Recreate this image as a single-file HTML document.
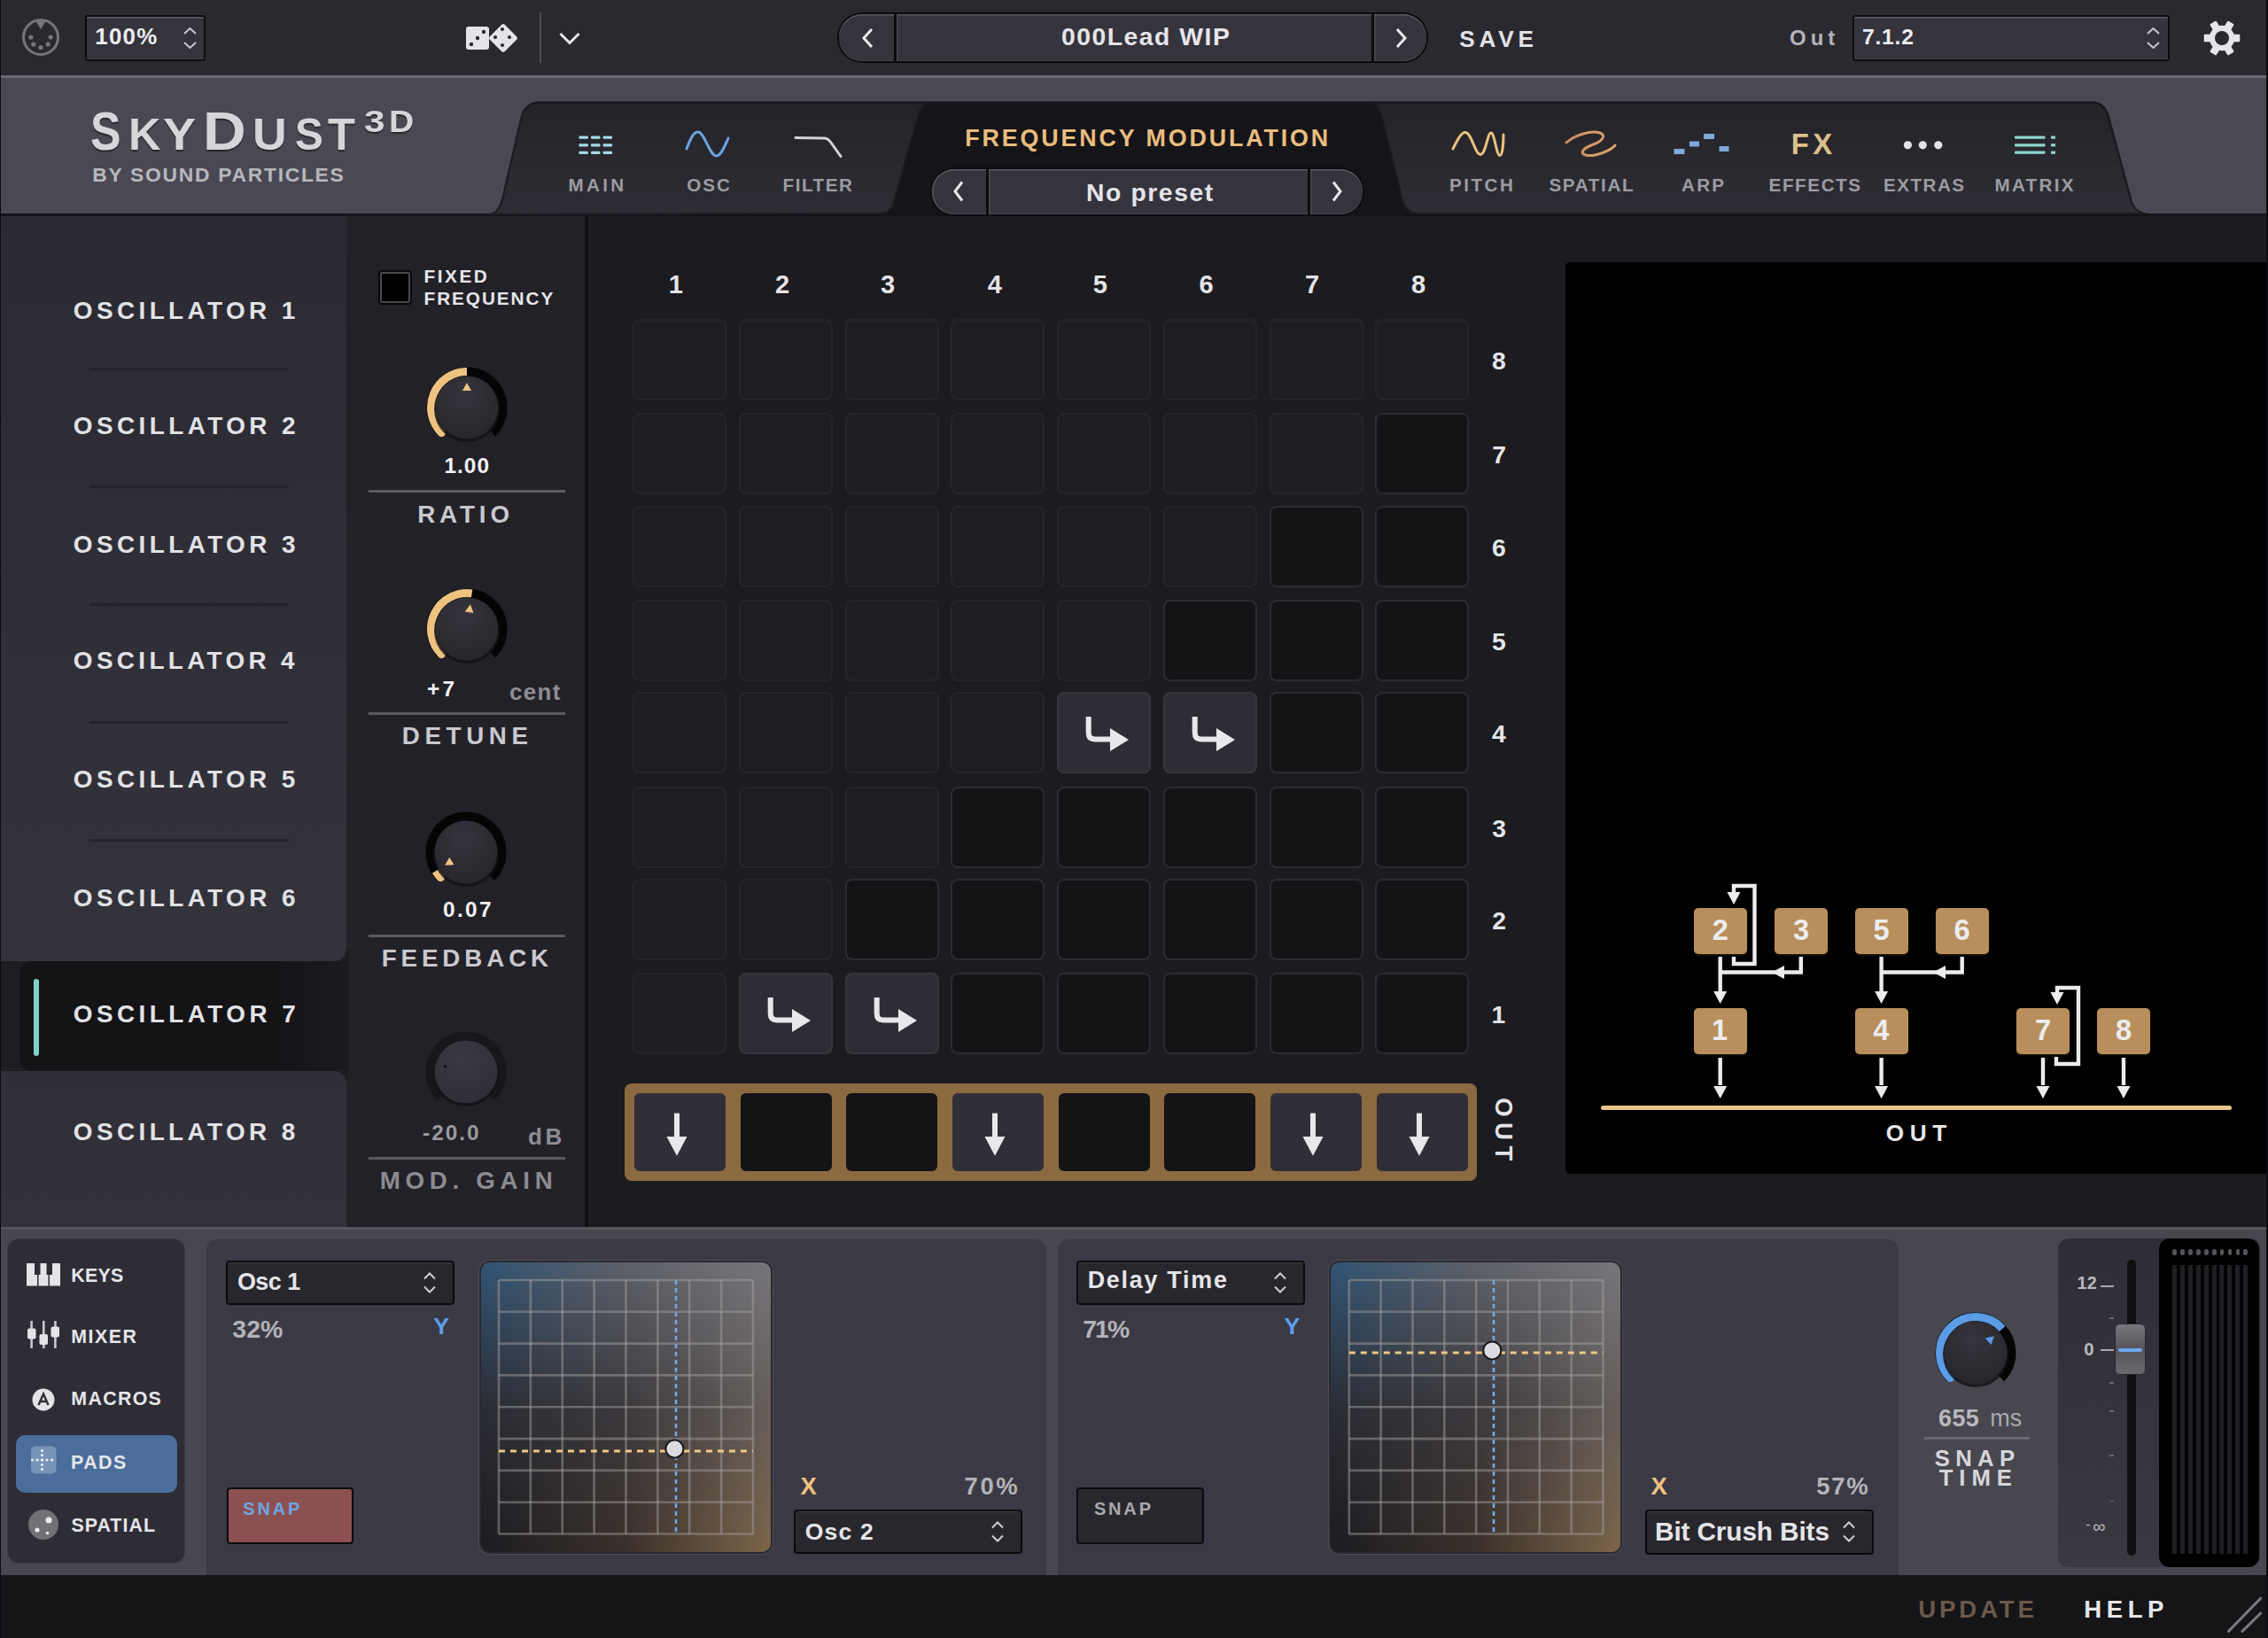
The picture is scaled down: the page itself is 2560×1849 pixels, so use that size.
<!DOCTYPE html>
<html><head><meta charset="utf-8">
<style>
*{margin:0;padding:0;box-sizing:border-box}
html,body{width:2560px;height:1849px;overflow:hidden;background:#1b1a1f;font-family:"Liberation Sans",sans-serif;font-weight:bold;position:relative}
.a{position:absolute}
.t{position:absolute;white-space:nowrap;line-height:1}
svg{position:absolute;overflow:visible}
</style></head><body>
<div class="a" style="left:0px;top:0px;width:2560px;height:86px;background:#2a2930;"></div>
<div class="a" style="left:0px;top:85px;width:2560px;height:3px;background:#6b6a72;"></div>
<svg style="left:20px;top:16px" width="52" height="52" viewBox="0 0 52 52">
<circle cx="26" cy="26" r="19.5" fill="none" stroke="#77767c" stroke-width="3"/>
<path d="M20.5 8 L31.5 8 L26 17 Z" fill="#77767c"/>
<circle cx="14.8" cy="26" r="2.6" fill="#77767c"/><circle cx="37.2" cy="26" r="2.6" fill="#77767c"/>
<circle cx="17.8" cy="34" r="2.6" fill="#77767c"/><circle cx="34.2" cy="34" r="2.6" fill="#77767c"/>
<circle cx="26" cy="37.5" r="2.6" fill="#77767c"/>
</svg>
<div class="a" style="left:96px;top:17px;width:136px;height:52px;background:#35343d;border:2px solid #0c0c0e;box-shadow:inset 0 1.5px 0 #5d5c64, inset 0 -1px 0 #45444c;border-radius:3px"></div>
<div class="t" style="left:107.37px;top:28.59px;font-size:25.87px;letter-spacing:1.21px;color:#ececef;font-weight:bold;">100%</div>
<svg style="left:205px;top:29px" width="20" height="28" viewBox="0 0 20 28">
<path d="M3 9 L9.5 3 L16 9 M3 19 L9.5 25 L16 19" fill="none" stroke="#c9c9ce" stroke-width="2"/>
</svg>
<svg style="left:524px;top:23px" width="62" height="40" viewBox="0 0 62 40">
<rect x="2" y="7" width="26" height="26" rx="3" fill="#e4e4e8"/>
<circle cx="8" cy="27" r="2.2" fill="#2a2930"/><circle cx="15" cy="20" r="2.2" fill="#2a2930"/><circle cx="22" cy="13" r="2.2" fill="#2a2930"/>
<rect x="35" y="6" width="24" height="24" rx="3" fill="#e4e4e8" transform="rotate(45 44 20) translate(-3 2)"/>
<circle cx="43" cy="10" r="2.1" fill="#2a2930"/><circle cx="35" cy="19" r="2.1" fill="#2a2930"/><circle cx="51" cy="19" r="2.1" fill="#2a2930"/>
<circle cx="43" cy="28" r="2.1" fill="#2a2930"/><circle cx="43" cy="19" r="0" fill="#2a2930"/>
</svg>
<div class="a" style="left:609px;top:14px;width:2px;height:57px;background:#4d4c53;"></div>
<svg style="left:628px;top:32px" width="30" height="22" viewBox="0 0 30 22">
<path d="M4.5 6 L15 16.5 L25.5 6" fill="none" stroke="#e8e8ec" stroke-width="3"/>
</svg>
<div class="a" style="left:945px;top:14px;width:667px;height:57px;background:#0b0b0d;border-radius:28px 28px 28px 28px"></div>
<div class="a" style="left:947px;top:16px;width:62px;height:53px;background:#35343d;border-radius:26px 0 0 26px;box-shadow:inset 0 1.5px 0 #5a5961, inset 0 -1px 0 #45444c"></div>
<div class="a" style="left:1012px;top:16px;width:536px;height:53px;background:#35343d;box-shadow:inset 0 1.5px 0 #5a5961, inset 0 -1px 0 #45444c, inset 1.5px 0 0 #4a4951"></div>
<div class="a" style="left:1551px;top:16px;width:59px;height:53px;background:#35343d;border-radius:0 26px 26px 0;box-shadow:inset 0 1.5px 0 #5a5961, inset 0 -1px 0 #45444c, inset 1.5px 0 0 #4a4951"></div>
<svg style="left:968px;top:30px" width="24" height="26" viewBox="0 0 24 26">
<path d="M16 3 L7 13 L16 23" fill="none" stroke="#e8e8ec" stroke-width="3"/></svg>
<svg style="left:1569px;top:30px" width="24" height="26" viewBox="0 0 24 26">
<path d="M8 3 L17 13 L8 23" fill="none" stroke="#e8e8ec" stroke-width="3"/></svg>
<div class="t" style="left:1197.88px;top:27.20px;font-size:28.34px;letter-spacing:1.52px;color:#e6e6ea;font-weight:bold;">000Lead WIP</div>
<div class="t" style="left:1647.25px;top:30.85px;font-size:26.16px;letter-spacing:4.84px;color:#e2e2e6;font-weight:bold;">SAVE</div>
<div class="t" style="left:2020.02px;top:30.69px;font-size:23.98px;letter-spacing:4.99px;color:#b4b3b9;font-weight:bold;">Out</div>
<div class="a" style="left:2091px;top:17px;width:358px;height:52px;background:#35343d;border:2px solid #0c0c0e;box-shadow:inset 0 1.5px 0 #5d5c64, inset 0 -1px 0 #45444c;border-radius:3px"></div>
<div class="t" style="left:2101.94px;top:30.08px;font-size:24.71px;letter-spacing:0.77px;color:#ececef;font-weight:bold;">7.1.2</div>
<svg style="left:2421px;top:29px" width="20" height="28" viewBox="0 0 20 28">
<path d="M3 9 L9.5 3 L16 9 M3 19 L9.5 25 L16 19" fill="none" stroke="#c9c9ce" stroke-width="2"/>
</svg>
<svg style="left:2486px;top:21px" width="44" height="44" viewBox="-22 -22 44 44">
<rect x="10" y="-4.2" width="10.3" height="8.4" rx="1" fill="#e6e6ea" transform="rotate(0)"/><rect x="10" y="-4.2" width="10.3" height="8.4" rx="1" fill="#e6e6ea" transform="rotate(60)"/><rect x="10" y="-4.2" width="10.3" height="8.4" rx="1" fill="#e6e6ea" transform="rotate(120)"/><rect x="10" y="-4.2" width="10.3" height="8.4" rx="1" fill="#e6e6ea" transform="rotate(180)"/><rect x="10" y="-4.2" width="10.3" height="8.4" rx="1" fill="#e6e6ea" transform="rotate(240)"/><rect x="10" y="-4.2" width="10.3" height="8.4" rx="1" fill="#e6e6ea" transform="rotate(300)"/>
<circle cx="0" cy="0" r="14.2" fill="#e6e6ea"/>
<circle cx="0" cy="0" r="8" fill="#2a2930"/>
</svg>
<div class="a" style="left:0px;top:88px;width:2560px;height:153px;background:#4a4953;"></div>
<div class="a" style="left:0px;top:241px;width:2560px;height:3px;background:#141318;"></div>
<svg style="left:0;top:0" width="2560" height="250" viewBox="0 0 2560 250">
<defs>
<linearGradient id="tabg" x1="0" y1="0" x2="0" y2="1">
<stop offset="0" stop-color="#242328"/><stop offset="1" stop-color="#2e2d35"/>
</linearGradient>
</defs>
<path d="M550 242 C560 242 565 232 567.5 219 L588 131 C591 120 598 114.5 610 114.5 L2361 114.5 C2372 114.5 2379 121 2382 135 L2407 228 C2410 236 2416 242 2425 242 Z" fill="#151418"/>
<path d="M552 242 C561 242 566 232 568.5 219 L589 131 C592 121 599 116.5 611 116.5 L1044 116.5 C1040 120 1038 124 1037 128 L1008 231 C1006 237 1001 241 992 241 Z" fill="url(#tabg)" stroke="#1c1b21" stroke-width="2"/>
<path d="M1550 116.5 L2360 116.5 C2371 116.5 2377 122 2380 135 L2406 228 C2409 236 2415 241 2424 241 L1601 241 C1592 241 1586 236 1583 226 L1562 140 C1559 128 1556 120 1550 116.5 Z" fill="url(#tabg)" stroke="#1c1b21" stroke-width="2"/>
</svg>
<div class="t" style="left:101.51px;top:116.70px;font-size:61.77px;color:#d6d6da;font-weight:bold;transform:scaleX(0.8376);transform-origin:0 0;text-shadow:0 2px 1px rgba(0,0,0,0.45)">S</div>
<div class="t" style="left:144.62px;top:127.16px;font-size:49.42px;color:#d6d6da;font-weight:bold;transform:scaleX(1.0212);transform-origin:0 0;text-shadow:0 2px 1px rgba(0,0,0,0.45)">K</div>
<div class="t" style="left:183.85px;top:127.16px;font-size:49.42px;color:#d6d6da;font-weight:bold;transform:scaleX(1.1238);transform-origin:0 0;text-shadow:0 2px 1px rgba(0,0,0,0.45)">Y</div>
<div class="t" style="left:229.08px;top:116.70px;font-size:61.77px;color:#d6d6da;font-weight:bold;transform:scaleX(1.0928);transform-origin:0 0;text-shadow:0 2px 1px rgba(0,0,0,0.45)">D</div>
<div class="t" style="left:284.58px;top:127.16px;font-size:49.42px;color:#d6d6da;font-weight:bold;transform:scaleX(1.0840);transform-origin:0 0;text-shadow:0 2px 1px rgba(0,0,0,0.45)">U</div>
<div class="t" style="left:332.62px;top:127.16px;font-size:49.42px;color:#d6d6da;font-weight:bold;transform:scaleX(0.9659);transform-origin:0 0;text-shadow:0 2px 1px rgba(0,0,0,0.45)">S</div>
<div class="t" style="left:370.43px;top:127.16px;font-size:49.42px;color:#d6d6da;font-weight:bold;transform:scaleX(1.0206);transform-origin:0 0;text-shadow:0 2px 1px rgba(0,0,0,0.45)">T</div>
<div class="t" style="left:411.03px;top:120.30px;font-size:35.90px;color:#d6d6da;font-weight:bold;transform:scaleX(1.1768);transform-origin:0 0;text-shadow:0 2px 1px rgba(0,0,0,0.45)">3</div>
<div class="t" style="left:438.98px;top:120.30px;font-size:35.90px;color:#d6d6da;font-weight:bold;transform:scaleX(1.0900);transform-origin:0 0;text-shadow:0 2px 1px rgba(0,0,0,0.45)">D</div>
<div class="t" style="left:104.27px;top:186.38px;font-size:22.82px;letter-spacing:1.74px;color:#b9b8be;font-weight:bold;">BY SOUND PARTICLES</div>
<svg style="left:650px;top:150px" width="48" height="28" viewBox="0 0 48 28"><rect x="3.4" y="3.6" width="10.5" height="3.2" rx="1.2" fill="#a3dbe8"/><rect x="17" y="3.6" width="10.5" height="3.2" rx="1.2" fill="#a3dbe8"/><rect x="30.6" y="3.6" width="10.5" height="3.2" rx="1.2" fill="#a3dbe8"/><rect x="3.4" y="12.3" width="10.5" height="3.2" rx="1.2" fill="#a3dbe8"/><rect x="17" y="12.3" width="10.5" height="3.2" rx="1.2" fill="#a3dbe8"/><rect x="30.6" y="12.3" width="10.5" height="3.2" rx="1.2" fill="#a3dbe8"/><rect x="3.4" y="20.799999999999997" width="10.5" height="3.2" rx="1.2" fill="#a3dbe8"/><rect x="17" y="20.799999999999997" width="10.5" height="3.2" rx="1.2" fill="#a3dbe8"/><rect x="30.6" y="20.799999999999997" width="10.5" height="3.2" rx="1.2" fill="#a3dbe8"/></svg>
<svg style="left:770px;top:143px" width="58" height="40" viewBox="770 143 58 40">
<path d="M775 168 C780 155 783 149 788 149 C795 149 801 176 808.5 176 C814 176 818 165 822 156" fill="none" stroke="#6aa3e0" stroke-width="3" stroke-linecap="round"/>
</svg>
<svg style="left:890px;top:148px" width="66" height="36" viewBox="890 148 66 36">
<path d="M898 155.5 L930 156 C934 156 936 158 938 161 L949 176.5" fill="none" stroke="#d4d4d8" stroke-width="3" stroke-linecap="round"/>
</svg>
<div class="t" style="left:641.42px;top:199.02px;font-size:20.64px;letter-spacing:3.34px;color:#9d9ca3;font-weight:bold;">MAIN</div>
<div class="t" style="left:775.15px;top:199.02px;font-size:20.64px;letter-spacing:2.09px;color:#9d9ca3;font-weight:bold;">OSC</div>
<div class="t" style="left:883.62px;top:199.02px;font-size:20.64px;letter-spacing:1.51px;color:#9d9ca3;font-weight:bold;">FILTER</div>
<div class="t" style="left:1089.20px;top:142.63px;font-size:26.89px;letter-spacing:2.85px;color:#e9bd7e;font-weight:bold;">FREQUENCY MODULATION</div>
<div class="a" style="left:1050px;top:189px;width:490px;height:55px;background:#0d0d10;border-radius:27px"></div>
<div class="a" style="left:1052px;top:191px;width:61px;height:51px;background:#35343d;border-radius:25px 0 0 25px;box-shadow:inset 0 1.5px 0 #5a5961, inset 1.5px 0 0 #55545c, inset 0 -1px 0 #45444c"></div>
<div class="a" style="left:1116px;top:191px;width:360px;height:51px;background:#35343d;box-shadow:inset 0 1.5px 0 #5a5961, inset 0 -1px 0 #45444c, inset 1.5px 0 0 #4a4951"></div>
<div class="a" style="left:1479px;top:191px;width:59px;height:51px;background:#35343d;border-radius:0 25px 25px 0;box-shadow:inset 0 1.5px 0 #5a5961, inset 0 -1px 0 #45444c, inset 1.5px 0 0 #4a4951"></div>
<svg style="left:1071px;top:203px" width="24" height="26" viewBox="0 0 24 26">
<path d="M15 2.5 L7 13 L15 23.5" fill="none" stroke="#e8e8ec" stroke-width="3"/></svg>
<svg style="left:1496px;top:203px" width="24" height="26" viewBox="0 0 24 26">
<path d="M9 2.5 L17 13 L9 23.5" fill="none" stroke="#e8e8ec" stroke-width="3"/></svg>
<div class="t" style="left:1226.10px;top:203.00px;font-size:28.34px;letter-spacing:1.56px;color:#e4e4e8;font-weight:bold;">No preset</div>
<svg style="left:1630px;top:140px" width="80" height="45" viewBox="1630 140 80 45">
<path d="M1640 168 C1645 158 1649 149.5 1654 149.5 C1661 149.5 1665 174.5 1671 174.5 C1677 174.5 1679 150 1683 150 C1687 150 1689 175.5 1693 175.5 C1696 175.5 1697 160 1697 152" fill="none" stroke="#e9c27d" stroke-width="3" stroke-linecap="round"/>
</svg>
<svg style="left:1760px;top:140px" width="72" height="45" viewBox="1760 140 72 45">
<defs><linearGradient id="spg" x1="0" y1="0" x2="1" y2="0"><stop offset="0" stop-color="#d08a60"/><stop offset="1" stop-color="#d9a66c"/></linearGradient></defs>
<path d="M1768 161 C1778 152 1796 147 1806 150 C1814 153 1808 160 1796 164 M1796 164 C1786 168 1782 174 1792 175.5 C1802 176.5 1818 170 1823 164" fill="none" stroke="url(#spg)" stroke-width="3" stroke-linecap="round"/>
</svg>
<svg style="left:1885px;top:148px" width="72" height="30" viewBox="1885 148 72 30">
<rect x="1889.5" y="168" width="12" height="6" fill="#7ea9dc"/>
<rect x="1907" y="159.5" width="11" height="6" fill="#7ea9dc"/>
<rect x="1923" y="151" width="12" height="6" fill="#7ea9dc"/>
<rect x="1940.5" y="165" width="11" height="6" fill="#7ea9dc"/>
</svg>
<div class="t" style="left:2021.80px;top:146.59px;font-size:32.85px;letter-spacing:4.51px;color:#dcc08a;font-weight:bold;">FX</div>
<svg style="left:2140px;top:150px" width="60" height="28" viewBox="2140 150 60 28">
<circle cx="2153.4" cy="163.8" r="4.6" fill="#e4e4e8"/><circle cx="2170.3" cy="163.8" r="4.6" fill="#e4e4e8"/><circle cx="2187.8" cy="163.8" r="4.6" fill="#e4e4e8"/>
</svg>
<svg style="left:2268px;top:148px" width="60" height="30" viewBox="2268 148 60 30">
<rect x="2274" y="153.5" width="34.5" height="3.2" rx="1" fill="#8fd6cf"/>
<rect x="2274" y="162.2" width="34.5" height="3.2" rx="1" fill="#8fd6cf"/>
<rect x="2274" y="170.6" width="34.5" height="3.2" rx="1" fill="#8fd6cf"/>
<rect x="2315" y="153.5" width="5" height="3.2" fill="#8fd6cf"/>
<rect x="2315" y="162.2" width="5" height="3.2" fill="#8fd6cf"/>
<rect x="2315" y="170.6" width="5" height="3.2" fill="#8fd6cf"/>
</svg>
<div class="t" style="left:1636.12px;top:199.22px;font-size:20.64px;letter-spacing:2.46px;color:#9d9ca3;font-weight:bold;">PITCH</div>
<div class="t" style="left:1748.41px;top:199.22px;font-size:20.64px;letter-spacing:1.66px;color:#9d9ca3;font-weight:bold;">SPATIAL</div>
<div class="t" style="left:1898.09px;top:199.22px;font-size:20.64px;letter-spacing:2.22px;color:#9d9ca3;font-weight:bold;">ARP</div>
<div class="t" style="left:1996.62px;top:199.22px;font-size:20.64px;letter-spacing:1.58px;color:#9d9ca3;font-weight:bold;">EFFECTS</div>
<div class="t" style="left:2126.12px;top:199.22px;font-size:20.64px;letter-spacing:1.45px;color:#9d9ca3;font-weight:bold;">EXTRAS</div>
<div class="t" style="left:2251.42px;top:199.22px;font-size:20.64px;letter-spacing:2.33px;color:#9d9ca3;font-weight:bold;">MATRIX</div>
<div class="a" style="left:391px;top:244px;width:269px;height:1141px;background:#222128;"></div>
<div class="a" style="left:660px;top:244px;width:4px;height:1141px;background:#111014;"></div>
<div class="a" style="left:664px;top:244px;width:1896px;height:1141px;background:#1c1b20;"></div>
<div class="a" style="left:0px;top:1070px;width:394px;height:150px;background:#1e1d23;"></div>
<div class="a" style="left:22px;top:1085px;width:372px;height:124px;background:linear-gradient(90deg,#141316 0%,#141316 78%,#1c1b21 100%);border-radius:14px 0 0 14px"></div>
<div class="a" style="left:0px;top:244px;width:391px;height:841px;background:linear-gradient(180deg,#2b2a33,#34333c);border-radius:0 0 14px 0"></div>
<div class="a" style="left:0px;top:1209px;width:391px;height:176px;background:linear-gradient(180deg,#302f38,#33323b);border-radius:0 14px 0 0"></div>
<div class="a" style="left:37.5px;top:1105px;width:6px;height:87px;background:#7fd3c8;border-radius:3px"></div>
<div class="t" style="left:82.86px;top:336.57px;font-size:27.91px;letter-spacing:4.39px;color:#e2e2e6;font-weight:bold;">OSCILLATOR 1</div>
<div class="t" style="left:82.86px;top:467.27px;font-size:27.91px;letter-spacing:4.42px;color:#e2e2e6;font-weight:bold;">OSCILLATOR 2</div>
<div class="t" style="left:82.86px;top:600.57px;font-size:27.91px;letter-spacing:4.41px;color:#e2e2e6;font-weight:bold;">OSCILLATOR 3</div>
<div class="t" style="left:82.86px;top:732.37px;font-size:27.91px;letter-spacing:4.33px;color:#e2e2e6;font-weight:bold;">OSCILLATOR 4</div>
<div class="t" style="left:82.86px;top:865.57px;font-size:27.91px;letter-spacing:4.39px;color:#e2e2e6;font-weight:bold;">OSCILLATOR 5</div>
<div class="t" style="left:82.86px;top:999.57px;font-size:27.91px;letter-spacing:4.41px;color:#e2e2e6;font-weight:bold;">OSCILLATOR 6</div>
<div class="t" style="left:82.86px;top:1130.57px;font-size:27.91px;letter-spacing:4.43px;color:#e2e2e6;font-weight:bold;">OSCILLATOR 7</div>
<div class="t" style="left:82.86px;top:1264.17px;font-size:27.91px;letter-spacing:4.39px;color:#e2e2e6;font-weight:bold;">OSCILLATOR 8</div>
<div class="a" style="left:101px;top:415px;width:225px;height:3px;background:#24232a;"></div>
<div class="a" style="left:101px;top:548px;width:225px;height:3px;background:#24232a;"></div>
<div class="a" style="left:101px;top:681px;width:225px;height:3px;background:#24232a;"></div>
<div class="a" style="left:101px;top:813.5px;width:225px;height:3px;background:#24232a;"></div>
<div class="a" style="left:101px;top:946.5px;width:225px;height:3px;background:#24232a;"></div>
<div class="a" style="left:426.5px;top:305px;width:38px;height:39px;background:#000;border:2px solid #0a0a0c;box-shadow:inset 0 0 0 2px #4a4950;border-radius:4px"></div>
<div class="t" style="left:478.61px;top:301.70px;font-size:20.79px;letter-spacing:2.51px;color:#e6e6ea;font-weight:bold;">FIXED</div>
<div class="t" style="left:478.61px;top:326.70px;font-size:20.79px;letter-spacing:1.90px;color:#e6e6ea;font-weight:bold;">FREQUENCY</div>
<svg style="left:466.70000000000005px;top:399.8px" width="120" height="120" viewBox="0 0 120 120"><defs><radialGradient id="kb526.7459.8" cx="0.45" cy="0.3" r="0.8"><stop offset="0" stop-color="#36353d"/><stop offset="1" stop-color="#25242a"/></radialGradient></defs><path d="M31.36 88.64 A40.5 40.5 0 1 1 88.64 88.64" fill="none" stroke="#050506" stroke-width="10"/><path d="M31.36 88.64 A40.5 40.5 0 0 1 60.00 19.50" fill="none" stroke="#eec27f" stroke-width="9" stroke-linecap="butt"/><circle cx="31.36" cy="88.64" r="4.5" fill="#eec27f"/><circle cx="60" cy="62" r="37" fill="#121115" opacity="0.8"/><circle cx="60" cy="60" r="35.5" fill="url(#kb526.7459.8)"/><g transform="translate(60.00 37.00) rotate(0)"><path d="M0 -5 L5 4 L-5 4 Z" fill="#eec27f"/></g></svg>
<div class="t" style="left:501.46px;top:514.12px;font-size:24.42px;letter-spacing:1.00px;color:#f2f2f4;font-weight:bold;">1.00</div>
<div class="a" style="left:416px;top:552.5px;width:222px;height:3px;background:#5c5b62;"></div>
<div class="t" style="left:471.14px;top:567.29px;font-size:27.76px;letter-spacing:4.91px;color:#c9c8ce;font-weight:bold;">RATIO</div>
<svg style="left:466.70000000000005px;top:649.8px" width="120" height="120" viewBox="0 0 120 120"><defs><radialGradient id="kb526.7709.8" cx="0.45" cy="0.3" r="0.8"><stop offset="0" stop-color="#36353d"/><stop offset="1" stop-color="#25242a"/></radialGradient></defs><path d="M31.36 88.64 A40.5 40.5 0 1 1 88.64 88.64" fill="none" stroke="#050506" stroke-width="10"/><path d="M31.36 88.64 A40.5 40.5 0 0 1 65.64 19.89" fill="none" stroke="#eec27f" stroke-width="9" stroke-linecap="butt"/><circle cx="31.36" cy="88.64" r="4.5" fill="#eec27f"/><circle cx="60" cy="62" r="37" fill="#121115" opacity="0.8"/><circle cx="60" cy="60" r="35.5" fill="url(#kb526.7709.8)"/><g transform="translate(63.20 37.22) rotate(8)"><path d="M0 -5 L5 4 L-5 4 Z" fill="#eec27f"/></g></svg>
<div class="t" style="left:481.97px;top:766.12px;font-size:24.42px;letter-spacing:3.26px;color:#f2f2f4;font-weight:bold;">+7</div>
<div class="t" style="left:574.98px;top:767.57px;font-size:26.02px;letter-spacing:1.28px;color:#8d8c92;font-weight:bold;">cent</div>
<div class="a" style="left:416px;top:803.5px;width:222px;height:3px;background:#5c5b62;"></div>
<div class="t" style="left:453.74px;top:816.59px;font-size:27.76px;letter-spacing:5.64px;color:#c9c8ce;font-weight:bold;">DETUNE</div>
<svg style="left:466.20000000000005px;top:901.6px" width="120" height="120" viewBox="0 0 120 120"><defs><radialGradient id="kb526.2961.6" cx="0.45" cy="0.3" r="0.8"><stop offset="0" stop-color="#36353d"/><stop offset="1" stop-color="#25242a"/></radialGradient></defs><path d="M31.36 88.64 A40.5 40.5 0 1 1 88.64 88.64" fill="none" stroke="#050506" stroke-width="10"/><path d="M31.36 88.64 A40.5 40.5 0 0 1 25.65 81.46" fill="none" stroke="#eec27f" stroke-width="9" stroke-linecap="butt"/><circle cx="31.36" cy="88.64" r="4.5" fill="#eec27f"/><circle cx="60" cy="62" r="37" fill="#121115" opacity="0.8"/><circle cx="60" cy="60" r="35.5" fill="url(#kb526.2961.6)"/><g transform="translate(40.49 72.19) rotate(-122)"><path d="M0 -5 L5 4 L-5 4 Z" fill="#eec27f"/></g></svg>
<div class="t" style="left:500.03px;top:1015.12px;font-size:24.42px;letter-spacing:2.37px;color:#f2f2f4;font-weight:bold;">0.07</div>
<div class="a" style="left:416px;top:1055px;width:222px;height:3px;background:#5c5b62;"></div>
<div class="t" style="left:430.64px;top:1068.09px;font-size:27.76px;letter-spacing:4.91px;color:#c9c8ce;font-weight:bold;">FEEDBACK</div>
<svg style="left:466px;top:1150.4px" width="120" height="120" viewBox="0 0 120 120"><defs><radialGradient id="kb5261210.4" cx="0.45" cy="0.3" r="0.8"><stop offset="0" stop-color="#3a3942"/><stop offset="1" stop-color="#2e2d35"/></radialGradient></defs><path d="M31.36 88.64 A40.5 40.5 0 1 1 88.64 88.64" fill="none" stroke="#17161b" stroke-width="10"/><circle cx="60" cy="62" r="37" fill="#121115" opacity="0.8"/><circle cx="60" cy="60" r="35.5" fill="url(#kb5261210.4)"/><circle cx="36.82" cy="53.79" r="1.6" fill="#0a0a0a"/></svg>
<div class="t" style="left:477.05px;top:1267.12px;font-size:24.42px;letter-spacing:2.00px;color:#9a999f;font-weight:bold;">-20.0</div>
<div class="t" style="left:595.93px;top:1269.57px;font-size:26.02px;letter-spacing:3.57px;color:#8d8c92;font-weight:bold;">dB</div>
<div class="a" style="left:416px;top:1305.5px;width:222px;height:3px;background:#5c5b62;"></div>
<div class="t" style="left:428.74px;top:1318.59px;font-size:27.76px;letter-spacing:5.69px;color:#8c8b91;font-weight:bold;">MOD. GAIN</div>
<div class="t" style="left:754.71px;top:307.39px;font-size:29.07px;letter-spacing:0.00px;color:#e4e4e8;font-weight:bold;">1</div>
<div class="t" style="left:874.99px;top:307.39px;font-size:29.07px;letter-spacing:0.00px;color:#e4e4e8;font-weight:bold;">2</div>
<div class="t" style="left:994.11px;top:307.39px;font-size:29.07px;letter-spacing:0.00px;color:#e4e4e8;font-weight:bold;">3</div>
<div class="t" style="left:1114.77px;top:307.39px;font-size:29.07px;letter-spacing:0.00px;color:#e4e4e8;font-weight:bold;">4</div>
<div class="t" style="left:1233.87px;top:307.39px;font-size:29.07px;letter-spacing:0.00px;color:#e4e4e8;font-weight:bold;">5</div>
<div class="t" style="left:1353.61px;top:307.39px;font-size:29.07px;letter-spacing:0.00px;color:#e4e4e8;font-weight:bold;">6</div>
<div class="t" style="left:1472.93px;top:307.39px;font-size:29.07px;letter-spacing:0.00px;color:#e4e4e8;font-weight:bold;">7</div>
<div class="t" style="left:1592.90px;top:307.39px;font-size:29.07px;letter-spacing:0.00px;color:#e4e4e8;font-weight:bold;">8</div>
<div class="t" style="left:1684.10px;top:393.10px;font-size:28.34px;letter-spacing:0.00px;color:#e4e4e8;font-weight:bold;">8</div>
<div class="a" style="left:714.3px;top:360px;width:106px;height:92px;border-radius:8px;background:#1e1d22;border:2px solid #26252b"></div>
<div class="a" style="left:834.0px;top:360px;width:106px;height:92px;border-radius:8px;background:#1e1d22;border:2px solid #26252b"></div>
<div class="a" style="left:953.7px;top:360px;width:106px;height:92px;border-radius:8px;background:#1e1d22;border:2px solid #26252b"></div>
<div class="a" style="left:1073.4px;top:360px;width:106px;height:92px;border-radius:8px;background:#1e1d22;border:2px solid #26252b"></div>
<div class="a" style="left:1193.1px;top:360px;width:106px;height:92px;border-radius:8px;background:#1e1d22;border:2px solid #26252b"></div>
<div class="a" style="left:1312.8px;top:360px;width:106px;height:92px;border-radius:8px;background:#1e1d22;border:2px solid #26252b"></div>
<div class="a" style="left:1432.5px;top:360px;width:106px;height:92px;border-radius:8px;background:#1e1d22;border:2px solid #26252b"></div>
<div class="a" style="left:1552.2px;top:360px;width:106px;height:92px;border-radius:8px;background:#1e1d22;border:2px solid #26252b"></div>
<div class="t" style="left:1684.13px;top:498.60px;font-size:28.34px;letter-spacing:0.00px;color:#e4e4e8;font-weight:bold;">7</div>
<div class="a" style="left:714.3px;top:465.5px;width:106px;height:92px;border-radius:8px;background:#1e1d22;border:2px solid #26252b"></div>
<div class="a" style="left:834.0px;top:465.5px;width:106px;height:92px;border-radius:8px;background:#1e1d22;border:2px solid #26252b"></div>
<div class="a" style="left:953.7px;top:465.5px;width:106px;height:92px;border-radius:8px;background:#1e1d22;border:2px solid #26252b"></div>
<div class="a" style="left:1073.4px;top:465.5px;width:106px;height:92px;border-radius:8px;background:#1e1d22;border:2px solid #26252b"></div>
<div class="a" style="left:1193.1px;top:465.5px;width:106px;height:92px;border-radius:8px;background:#1e1d22;border:2px solid #26252b"></div>
<div class="a" style="left:1312.8px;top:465.5px;width:106px;height:92px;border-radius:8px;background:#1e1d22;border:2px solid #26252b"></div>
<div class="a" style="left:1432.5px;top:465.5px;width:106px;height:92px;border-radius:8px;background:#1e1d22;border:2px solid #26252b"></div>
<div class="a" style="left:1552.2px;top:465.5px;width:106px;height:92px;border-radius:8px;background:#141316;border:2px solid #2c2b31"></div>
<div class="t" style="left:1684.11px;top:604.10px;font-size:28.34px;letter-spacing:0.00px;color:#e4e4e8;font-weight:bold;">6</div>
<div class="a" style="left:714.3px;top:571px;width:106px;height:92px;border-radius:8px;background:#1e1d22;border:2px solid #26252b"></div>
<div class="a" style="left:834.0px;top:571px;width:106px;height:92px;border-radius:8px;background:#1e1d22;border:2px solid #26252b"></div>
<div class="a" style="left:953.7px;top:571px;width:106px;height:92px;border-radius:8px;background:#1e1d22;border:2px solid #26252b"></div>
<div class="a" style="left:1073.4px;top:571px;width:106px;height:92px;border-radius:8px;background:#1e1d22;border:2px solid #26252b"></div>
<div class="a" style="left:1193.1px;top:571px;width:106px;height:92px;border-radius:8px;background:#1e1d22;border:2px solid #26252b"></div>
<div class="a" style="left:1312.8px;top:571px;width:106px;height:92px;border-radius:8px;background:#1e1d22;border:2px solid #26252b"></div>
<div class="a" style="left:1432.5px;top:571px;width:106px;height:92px;border-radius:8px;background:#141316;border:2px solid #2c2b31"></div>
<div class="a" style="left:1552.2px;top:571px;width:106px;height:92px;border-radius:8px;background:#141316;border:2px solid #2c2b31"></div>
<div class="t" style="left:1684.08px;top:709.60px;font-size:28.34px;letter-spacing:0.00px;color:#e4e4e8;font-weight:bold;">5</div>
<div class="a" style="left:714.3px;top:676.5px;width:106px;height:92px;border-radius:8px;background:#1e1d22;border:2px solid #26252b"></div>
<div class="a" style="left:834.0px;top:676.5px;width:106px;height:92px;border-radius:8px;background:#1e1d22;border:2px solid #26252b"></div>
<div class="a" style="left:953.7px;top:676.5px;width:106px;height:92px;border-radius:8px;background:#1e1d22;border:2px solid #26252b"></div>
<div class="a" style="left:1073.4px;top:676.5px;width:106px;height:92px;border-radius:8px;background:#1e1d22;border:2px solid #26252b"></div>
<div class="a" style="left:1193.1px;top:676.5px;width:106px;height:92px;border-radius:8px;background:#1e1d22;border:2px solid #26252b"></div>
<div class="a" style="left:1312.8px;top:676.5px;width:106px;height:92px;border-radius:8px;background:#141316;border:2px solid #2c2b31"></div>
<div class="a" style="left:1432.5px;top:676.5px;width:106px;height:92px;border-radius:8px;background:#141316;border:2px solid #2c2b31"></div>
<div class="a" style="left:1552.2px;top:676.5px;width:106px;height:92px;border-radius:8px;background:#141316;border:2px solid #2c2b31"></div>
<div class="t" style="left:1683.98px;top:814.10px;font-size:28.34px;letter-spacing:0.00px;color:#e4e4e8;font-weight:bold;">4</div>
<div class="a" style="left:714.3px;top:781px;width:106px;height:92px;border-radius:8px;background:#1e1d22;border:2px solid #26252b"></div>
<div class="a" style="left:834.0px;top:781px;width:106px;height:92px;border-radius:8px;background:#1e1d22;border:2px solid #26252b"></div>
<div class="a" style="left:953.7px;top:781px;width:106px;height:92px;border-radius:8px;background:#1e1d22;border:2px solid #26252b"></div>
<div class="a" style="left:1073.4px;top:781px;width:106px;height:92px;border-radius:8px;background:#1e1d22;border:2px solid #26252b"></div>
<div class="a" style="left:1193.1px;top:781px;width:106px;height:92px;border-radius:8px;background:#2e2d35;border:2px solid #37363d"></div>
<svg style="left:1221.1px;top:807px" width="60" height="44" viewBox="0 0 60 44">
<path d="M7.7 2 L7.7 20 Q7.7 27.5 15 27.5 L34 27.5" fill="none" stroke="#e8e8ec" stroke-width="6"/>
<path d="M32 15 L53 28 L32 41 Z" fill="#e8e8ec"/></svg>
<div class="a" style="left:1312.8px;top:781px;width:106px;height:92px;border-radius:8px;background:#2e2d35;border:2px solid #37363d"></div>
<svg style="left:1340.8px;top:807px" width="60" height="44" viewBox="0 0 60 44">
<path d="M7.7 2 L7.7 20 Q7.7 27.5 15 27.5 L34 27.5" fill="none" stroke="#e8e8ec" stroke-width="6"/>
<path d="M32 15 L53 28 L32 41 Z" fill="#e8e8ec"/></svg>
<div class="a" style="left:1432.5px;top:781px;width:106px;height:92px;border-radius:8px;background:#141316;border:2px solid #2c2b31"></div>
<div class="a" style="left:1552.2px;top:781px;width:106px;height:92px;border-radius:8px;background:#141316;border:2px solid #2c2b31"></div>
<div class="t" style="left:1684.31px;top:921.10px;font-size:28.34px;letter-spacing:0.00px;color:#e4e4e8;font-weight:bold;">3</div>
<div class="a" style="left:714.3px;top:888px;width:106px;height:92px;border-radius:8px;background:#1e1d22;border:2px solid #26252b"></div>
<div class="a" style="left:834.0px;top:888px;width:106px;height:92px;border-radius:8px;background:#1e1d22;border:2px solid #26252b"></div>
<div class="a" style="left:953.7px;top:888px;width:106px;height:92px;border-radius:8px;background:#1e1d22;border:2px solid #26252b"></div>
<div class="a" style="left:1073.4px;top:888px;width:106px;height:92px;border-radius:8px;background:#141316;border:2px solid #2c2b31"></div>
<div class="a" style="left:1193.1px;top:888px;width:106px;height:92px;border-radius:8px;background:#141316;border:2px solid #2c2b31"></div>
<div class="a" style="left:1312.8px;top:888px;width:106px;height:92px;border-radius:8px;background:#141316;border:2px solid #2c2b31"></div>
<div class="a" style="left:1432.5px;top:888px;width:106px;height:92px;border-radius:8px;background:#141316;border:2px solid #2c2b31"></div>
<div class="a" style="left:1552.2px;top:888px;width:106px;height:92px;border-radius:8px;background:#141316;border:2px solid #2c2b31"></div>
<div class="t" style="left:1684.19px;top:1025.10px;font-size:28.34px;letter-spacing:0.00px;color:#e4e4e8;font-weight:bold;">2</div>
<div class="a" style="left:714.3px;top:992px;width:106px;height:92px;border-radius:8px;background:#1e1d22;border:2px solid #26252b"></div>
<div class="a" style="left:834.0px;top:992px;width:106px;height:92px;border-radius:8px;background:#1e1d22;border:2px solid #26252b"></div>
<div class="a" style="left:953.7px;top:992px;width:106px;height:92px;border-radius:8px;background:#141316;border:2px solid #2c2b31"></div>
<div class="a" style="left:1073.4px;top:992px;width:106px;height:92px;border-radius:8px;background:#141316;border:2px solid #2c2b31"></div>
<div class="a" style="left:1193.1px;top:992px;width:106px;height:92px;border-radius:8px;background:#141316;border:2px solid #2c2b31"></div>
<div class="a" style="left:1312.8px;top:992px;width:106px;height:92px;border-radius:8px;background:#141316;border:2px solid #2c2b31"></div>
<div class="a" style="left:1432.5px;top:992px;width:106px;height:92px;border-radius:8px;background:#141316;border:2px solid #2c2b31"></div>
<div class="a" style="left:1552.2px;top:992px;width:106px;height:92px;border-radius:8px;background:#141316;border:2px solid #2c2b31"></div>
<div class="t" style="left:1683.62px;top:1131.10px;font-size:28.34px;letter-spacing:0.00px;color:#e4e4e8;font-weight:bold;">1</div>
<div class="a" style="left:714.3px;top:1098px;width:106px;height:92px;border-radius:8px;background:#1e1d22;border:2px solid #26252b"></div>
<div class="a" style="left:834.0px;top:1098px;width:106px;height:92px;border-radius:8px;background:#2e2d35;border:2px solid #37363d"></div>
<svg style="left:862.0px;top:1124px" width="60" height="44" viewBox="0 0 60 44">
<path d="M7.7 2 L7.7 20 Q7.7 27.5 15 27.5 L34 27.5" fill="none" stroke="#e8e8ec" stroke-width="6"/>
<path d="M32 15 L53 28 L32 41 Z" fill="#e8e8ec"/></svg>
<div class="a" style="left:953.7px;top:1098px;width:106px;height:92px;border-radius:8px;background:#2e2d35;border:2px solid #37363d"></div>
<svg style="left:981.7px;top:1124px" width="60" height="44" viewBox="0 0 60 44">
<path d="M7.7 2 L7.7 20 Q7.7 27.5 15 27.5 L34 27.5" fill="none" stroke="#e8e8ec" stroke-width="6"/>
<path d="M32 15 L53 28 L32 41 Z" fill="#e8e8ec"/></svg>
<div class="a" style="left:1073.4px;top:1098px;width:106px;height:92px;border-radius:8px;background:#141316;border:2px solid #2c2b31"></div>
<div class="a" style="left:1193.1px;top:1098px;width:106px;height:92px;border-radius:8px;background:#141316;border:2px solid #2c2b31"></div>
<div class="a" style="left:1312.8px;top:1098px;width:106px;height:92px;border-radius:8px;background:#141316;border:2px solid #2c2b31"></div>
<div class="a" style="left:1432.5px;top:1098px;width:106px;height:92px;border-radius:8px;background:#141316;border:2px solid #2c2b31"></div>
<div class="a" style="left:1552.2px;top:1098px;width:106px;height:92px;border-radius:8px;background:#141316;border:2px solid #2c2b31"></div>
<div class="a" style="left:704.6px;top:1222.5px;width:962.4px;height:110px;background:#8b6a42;border-radius:8px"></div>
<div class="a" style="left:715.8px;top:1233.7px;width:103px;height:88.3px;border-radius:6px;background:#302f37"></div>
<svg style="left:750.2px;top:1256px" width="28" height="50" viewBox="0 0 28 50">
<path d="M14 0.6 L14 29" stroke="#e8e8ec" stroke-width="6"/>
<path d="M2.5 27 L14 48.7 L25.5 27 Z" fill="#e8e8ec"/></svg>
<div class="a" style="left:835.5px;top:1233.7px;width:103px;height:88.3px;border-radius:6px;background:#141316"></div>
<div class="a" style="left:955.2px;top:1233.7px;width:103px;height:88.3px;border-radius:6px;background:#141316"></div>
<div class="a" style="left:1074.9px;top:1233.7px;width:103px;height:88.3px;border-radius:6px;background:#302f37"></div>
<svg style="left:1109.3px;top:1256px" width="28" height="50" viewBox="0 0 28 50">
<path d="M14 0.6 L14 29" stroke="#e8e8ec" stroke-width="6"/>
<path d="M2.5 27 L14 48.7 L25.5 27 Z" fill="#e8e8ec"/></svg>
<div class="a" style="left:1194.6px;top:1233.7px;width:103px;height:88.3px;border-radius:6px;background:#141316"></div>
<div class="a" style="left:1314.3px;top:1233.7px;width:103px;height:88.3px;border-radius:6px;background:#141316"></div>
<div class="a" style="left:1434.0px;top:1233.7px;width:103px;height:88.3px;border-radius:6px;background:#302f37"></div>
<svg style="left:1468.4px;top:1256px" width="28" height="50" viewBox="0 0 28 50">
<path d="M14 0.6 L14 29" stroke="#e8e8ec" stroke-width="6"/>
<path d="M2.5 27 L14 48.7 L25.5 27 Z" fill="#e8e8ec"/></svg>
<div class="a" style="left:1553.7px;top:1233.7px;width:103px;height:88.3px;border-radius:6px;background:#302f37"></div>
<svg style="left:1588.1px;top:1256px" width="28" height="50" viewBox="0 0 28 50">
<path d="M14 0.6 L14 29" stroke="#e8e8ec" stroke-width="6"/>
<path d="M2.5 27 L14 48.7 L25.5 27 Z" fill="#e8e8ec"/></svg>
<div class="t" style="left:1696.6px;top:1278px;font-size:27.5px;letter-spacing:6.5px;color:#e4e4e8;transform:translate(-50%,-50%) rotate(90deg);transform-origin:center">OUT</div>
<div class="a" style="left:1767px;top:296px;width:793px;height:1029px;background:#000;border-radius:5px 0 0 5px"></div>
<div class="a" style="left:1911.7px;top:1025px;width:60px;height:51.5px;border-radius:5px;background:#b88f5c;box-shadow:0 2px 2px rgba(40,30,20,0.6)"></div>
<div class="t" style="left:1932.69px;top:1034.31px;font-size:32.70px;letter-spacing:0.00px;color:#ececef;font-weight:bold;">2</div>
<div class="a" style="left:2002.8px;top:1025px;width:60px;height:51.5px;border-radius:5px;background:#b88f5c;box-shadow:0 2px 2px rgba(40,30,20,0.6)"></div>
<div class="t" style="left:2023.92px;top:1034.31px;font-size:32.70px;letter-spacing:0.00px;color:#ececef;font-weight:bold;">3</div>
<div class="a" style="left:2093.6px;top:1025px;width:60px;height:51.5px;border-radius:5px;background:#b88f5c;box-shadow:0 2px 2px rgba(40,30,20,0.6)"></div>
<div class="t" style="left:2114.46px;top:1034.31px;font-size:32.70px;letter-spacing:0.00px;color:#ececef;font-weight:bold;">5</div>
<div class="a" style="left:2184.7px;top:1025px;width:60px;height:51.5px;border-radius:5px;background:#b88f5c;box-shadow:0 2px 2px rgba(40,30,20,0.6)"></div>
<div class="t" style="left:2205.60px;top:1034.31px;font-size:32.70px;letter-spacing:0.00px;color:#ececef;font-weight:bold;">6</div>
<div class="a" style="left:1911.7px;top:1138px;width:60px;height:51.5px;border-radius:5px;background:#b88f5c;box-shadow:0 2px 2px rgba(40,30,20,0.6)"></div>
<div class="t" style="left:1932.03px;top:1147.31px;font-size:32.70px;letter-spacing:0.00px;color:#ececef;font-weight:bold;">1</div>
<div class="a" style="left:2093.6px;top:1138px;width:60px;height:51.5px;border-radius:5px;background:#b88f5c;box-shadow:0 2px 2px rgba(40,30,20,0.6)"></div>
<div class="t" style="left:2114.35px;top:1147.31px;font-size:32.70px;letter-spacing:0.00px;color:#ececef;font-weight:bold;">4</div>
<div class="a" style="left:2276.0px;top:1138px;width:60px;height:51.5px;border-radius:5px;background:#b88f5c;box-shadow:0 2px 2px rgba(40,30,20,0.6)"></div>
<div class="t" style="left:2296.92px;top:1147.31px;font-size:32.70px;letter-spacing:0.00px;color:#ececef;font-weight:bold;">7</div>
<div class="a" style="left:2367.0px;top:1138px;width:60px;height:51.5px;border-radius:5px;background:#b88f5c;box-shadow:0 2px 2px rgba(40,30,20,0.6)"></div>
<div class="t" style="left:2387.89px;top:1147.31px;font-size:32.70px;letter-spacing:0.00px;color:#ececef;font-weight:bold;">8</div>
<svg style="left:0;top:0" width="2560" height="1849" viewBox="0 0 2560 1849"><path d="M1941.7 1194 L1941.7 1225" stroke="#ececef" stroke-width="4.4" fill="none"/><path d="M1934.2 1226 L1941.7 1240 L1949.2 1226 Z" fill="#ececef"/><path d="M2123.6 1194 L2123.6 1225" stroke="#ececef" stroke-width="4.4" fill="none"/><path d="M2116.1 1226 L2123.6 1240 L2131.1 1226 Z" fill="#ececef"/><path d="M2306 1194 L2306 1225" stroke="#ececef" stroke-width="4.4" fill="none"/><path d="M2298.5 1226 L2306 1240 L2313.5 1226 Z" fill="#ececef"/><path d="M2397 1194 L2397 1225" stroke="#ececef" stroke-width="4.4" fill="none"/><path d="M2389.5 1226 L2397 1240 L2404.5 1226 Z" fill="#ececef"/><path d="M1941.7 1080 L1941.7 1122" stroke="#ececef" stroke-width="4.4" fill="none"/><path d="M1934.2 1119 L1941.7 1133 L1949.2 1119 Z" fill="#ececef"/><path d="M1941.7 1097.5 L2032.8 1097.5 L2032.8 1080" stroke="#ececef" stroke-width="4.4" fill="none"/><path d="M2014 1090.0 L2000 1097.5 L2014 1105.0 Z" fill="#ececef"/><path d="M1957 1080 L1957 1088 L1980.5 1088 L1980.5 1000 L1957 1000 L1957 1010" stroke="#ececef" stroke-width="4.4" fill="none"/><path d="M1949.5 1007 L1957 1021 L1964.5 1007 Z" fill="#ececef"/><path d="M2123.6 1080 L2123.6 1122" stroke="#ececef" stroke-width="4.4" fill="none"/><path d="M2116.1 1119 L2123.6 1133 L2131.1 1119 Z" fill="#ececef"/><path d="M2123.6 1097.5 L2214.7 1097.5 L2214.7 1080" stroke="#ececef" stroke-width="4.4" fill="none"/><path d="M2196 1090.0 L2182 1097.5 L2196 1105.0 Z" fill="#ececef"/><path d="M2321 1193 L2321 1201 L2346 1201 L2346 1115 L2322 1115 L2322 1124" stroke="#ececef" stroke-width="4.4" fill="none"/><path d="M2314.5 1120 L2322 1134 L2329.5 1120 Z" fill="#ececef"/></svg>
<div class="a" style="left:1807px;top:1248px;width:712px;height:5px;background:#eac48a;border-radius:3px"></div>
<div class="t" style="left:2128.63px;top:1265.85px;font-size:26.16px;letter-spacing:6.71px;color:#e6e6ea;font-weight:bold;">OUT</div>
<div class="a" style="left:0px;top:1385px;width:2560px;height:393px;background:#48474f;"></div>
<div class="a" style="left:0px;top:1385px;width:2560px;height:3px;background:#55545c;"></div>
<div class="a" style="left:9px;top:1398.5px;width:199px;height:365px;background:#2e2d36;border-radius:12px;box-shadow:0 0 0 1px #3d3c44"></div>
<div class="a" style="left:18px;top:1620px;width:182px;height:65px;background:#4a6d9b;border-radius:10px"></div>
<div class="t" style="left:80.37px;top:1429.81px;font-size:21.37px;letter-spacing:0.23px;color:#e6e6ea;font-weight:bold;">KEYS</div>
<div class="t" style="left:80.37px;top:1498.61px;font-size:21.37px;letter-spacing:1.47px;color:#e6e6ea;font-weight:bold;">MIXER</div>
<div class="t" style="left:80.37px;top:1569.41px;font-size:21.37px;letter-spacing:1.30px;color:#e6e6ea;font-weight:bold;">MACROS</div>
<div class="t" style="left:79.97px;top:1640.91px;font-size:21.37px;letter-spacing:1.50px;color:#e6e6ea;font-weight:bold;">PADS</div>
<div class="t" style="left:80.38px;top:1712.11px;font-size:21.37px;letter-spacing:1.08px;color:#e6e6ea;font-weight:bold;">SPATIAL</div>
<svg style="left:28px;top:1424px" width="42" height="30" viewBox="0 0 42 30">
<path d="M2 2 L14 2 L14 27.5 L2 27.5 Z M15.5 2 L26.5 2 L26.5 27.5 L15.5 27.5 Z M28 2 L40 2 L40 27.5 L28 27.5 Z" fill="#e4e4e8"/>
<rect x="11" y="0" width="6.5" height="15" fill="#2e2d36"/><rect x="24.5" y="0" width="6.5" height="15" fill="#2e2d36"/>
</svg>
<svg style="left:28px;top:1488px" width="42" height="38" viewBox="0 0 42 38">
<path d="M7.6 3 L7.6 34 M21.3 3 L21.3 34 M34.4 3 L34.4 34" stroke="#c8c8cc" stroke-width="2.6"/>
<rect x="3" y="11.5" width="9.5" height="12" rx="2" fill="#e4e4e8"/>
<rect x="16.5" y="18" width="9.5" height="12" rx="2" fill="#e4e4e8"/>
<rect x="29.5" y="9.5" width="9.5" height="12" rx="2" fill="#e4e4e8"/>
</svg>
<svg style="left:34px;top:1565px" width="30" height="30" viewBox="0 0 30 30">
<circle cx="15" cy="15" r="12.5" fill="#e4e4e8"/>
<path d="M9.5 21 L15 8.5 L20.5 21 M11.5 17 L18.5 17" fill="none" stroke="#2e2d36" stroke-width="2.4"/>
</svg>
<svg style="left:33px;top:1631px" width="32" height="34" viewBox="0 0 32 34">
<rect x="2" y="1.5" width="28.5" height="31" rx="5" fill="#9fb3cf" opacity="0.55"/>
<g fill="#e8eef6"><circle cx="14.5" cy="6.5" r="1.6"/><circle cx="14.5" cy="11.5" r="1.6"/><circle cx="14.5" cy="17" r="1.8"/><circle cx="14.5" cy="22.5" r="1.6"/><circle cx="14.5" cy="27.5" r="1.6"/>
<circle cx="3.5" cy="17" r="1.6"/><circle cx="9" cy="17" r="1.6"/><circle cx="20" cy="17" r="1.6"/><circle cx="25.5" cy="17" r="1.6"/></g>
</svg>
<svg style="left:31px;top:1703px" width="36" height="36" viewBox="0 0 36 36">
<circle cx="18" cy="18" r="17" fill="#727176"/>
<circle cx="24" cy="13" r="3.6" fill="#ececef"/><circle cx="11" cy="24" r="2.6" fill="#ececef"/><circle cx="22.5" cy="27.5" r="1.8" fill="#ececef"/>
</svg>
<div class="a" style="left:232.5px;top:1398.5px;width:948.5px;height:380px;background:#3b3a44;border-radius:12px 12px 0 0"></div>
<div class="a" style="left:255px;top:1422.5px;width:258px;height:50.0px;background:#28272d;border:2px solid #0b0b0d;border-radius:4px;box-shadow:inset 0 1px 0 #3e3d44"></div>
<div class="t" style="left:267.90px;top:1433.73px;font-size:26.89px;letter-spacing:-0.45px;color:#e4e4e8;font-weight:bold;">Osc 1</div>
<svg style="left:475.0px;top:1433.5px" width="20" height="28" viewBox="0 0 20 28">
<path d="M4 9.5 L10 3.5 L16 9.5 M4 18.5 L10 24.5 L16 18.5" fill="none" stroke="#d0d0d4" stroke-width="2"/></svg>
<div class="t" style="left:262.35px;top:1485.98px;font-size:28.49px;letter-spacing:0.04px;color:#b4b3b9;font-weight:bold;">32%</div>
<div class="t" style="left:489.35px;top:1484.28px;font-size:26.60px;letter-spacing:0.00px;color:#5c9fe8;font-weight:bold;">Y</div>
<div class="a" style="left:255.8px;top:1679px;width:143.2px;height:64px;background:#8c5050;border:2px solid #0b0b0d;border-radius:4px"></div>
<div class="t" style="left:274.22px;top:1692.82px;font-size:20.06px;letter-spacing:2.81px;color:#6da6e2;font-weight:bold;">SNAP</div>
<div class="a" style="left:540.5px;top:1422.5px;width:331.0px;height:331.5px;background:#2a2930;border-radius:12px;box-shadow:0 0 0 1px #4e4d55"></div>
<div class="a" style="left:542.5px;top:1424.5px;width:327.0px;height:327.5px;border-radius:10px;overflow:hidden"><div class="a" style="left:0;top:0.0px;width:327.0px;height:164.25px;background:linear-gradient(90deg,#315575,#5e6169,#78767c)"></div><div class="a" style="left:0;top:0.0px;width:327.0px;height:164.25px;background:linear-gradient(90deg,#2b2d35,#3c393d,#655e5a);-webkit-mask-image:linear-gradient(180deg,transparent,#000)"></div><div class="a" style="left:0;top:163.75px;width:327.0px;height:164.25px;background:linear-gradient(90deg,#2b2d35,#3c393d,#655e5a)"></div><div class="a" style="left:0;top:163.75px;width:327.0px;height:164.25px;background:linear-gradient(90deg,#1c1b20,#3b312a,#7c6549);-webkit-mask-image:linear-gradient(180deg,transparent,#000)"></div></div>
<svg style="left:0;top:0" width="2560" height="1849" viewBox="0 0 2560 1849"><line x1="563.0" y1="1445.0" x2="563.0" y2="1731.5" stroke="#a29e9c" stroke-opacity="0.5" stroke-width="2.6"/><line x1="563.0" y1="1445.0" x2="850.0" y2="1445.0" stroke="#a29e9c" stroke-opacity="0.5" stroke-width="2.6"/><line x1="598.9" y1="1445.0" x2="598.9" y2="1731.5" stroke="#a29e9c" stroke-opacity="0.5" stroke-width="2.6"/><line x1="563.0" y1="1480.8" x2="850.0" y2="1480.8" stroke="#a29e9c" stroke-opacity="0.5" stroke-width="2.6"/><line x1="634.8" y1="1445.0" x2="634.8" y2="1731.5" stroke="#a29e9c" stroke-opacity="0.5" stroke-width="2.6"/><line x1="563.0" y1="1516.6" x2="850.0" y2="1516.6" stroke="#a29e9c" stroke-opacity="0.5" stroke-width="2.6"/><line x1="670.6" y1="1445.0" x2="670.6" y2="1731.5" stroke="#a29e9c" stroke-opacity="0.5" stroke-width="2.6"/><line x1="563.0" y1="1552.4" x2="850.0" y2="1552.4" stroke="#a29e9c" stroke-opacity="0.5" stroke-width="2.6"/><line x1="706.5" y1="1445.0" x2="706.5" y2="1731.5" stroke="#a29e9c" stroke-opacity="0.5" stroke-width="2.6"/><line x1="563.0" y1="1588.2" x2="850.0" y2="1588.2" stroke="#a29e9c" stroke-opacity="0.5" stroke-width="2.6"/><line x1="742.4" y1="1445.0" x2="742.4" y2="1731.5" stroke="#a29e9c" stroke-opacity="0.5" stroke-width="2.6"/><line x1="563.0" y1="1624.1" x2="850.0" y2="1624.1" stroke="#a29e9c" stroke-opacity="0.5" stroke-width="2.6"/><line x1="778.2" y1="1445.0" x2="778.2" y2="1731.5" stroke="#a29e9c" stroke-opacity="0.5" stroke-width="2.6"/><line x1="563.0" y1="1659.9" x2="850.0" y2="1659.9" stroke="#a29e9c" stroke-opacity="0.5" stroke-width="2.6"/><line x1="814.1" y1="1445.0" x2="814.1" y2="1731.5" stroke="#a29e9c" stroke-opacity="0.5" stroke-width="2.6"/><line x1="563.0" y1="1695.7" x2="850.0" y2="1695.7" stroke="#a29e9c" stroke-opacity="0.5" stroke-width="2.6"/><line x1="850.0" y1="1445.0" x2="850.0" y2="1731.5" stroke="#a29e9c" stroke-opacity="0.5" stroke-width="2.6"/><line x1="563.0" y1="1731.5" x2="850.0" y2="1731.5" stroke="#a29e9c" stroke-opacity="0.5" stroke-width="2.6"/><line x1="763" y1="1445.0" x2="763" y2="1731.5" stroke="#6fa8ec" stroke-width="2.6" stroke-dasharray="5 4"/><line x1="563.0" y1="1638" x2="850.0" y2="1638" stroke="#f0c77f" stroke-width="3" stroke-dasharray="7 6"/><circle cx="761.4" cy="1635.5" r="10" fill="#dcdce0" stroke="#1a1a1e" stroke-width="2"/></svg>
<div class="t" style="left:903.56px;top:1663.94px;font-size:27.47px;letter-spacing:0.00px;color:#eec27f;font-weight:bold;">X</div>
<div class="t" style="left:1088.52px;top:1663.94px;font-size:27.47px;letter-spacing:2.61px;color:#b4b3b9;font-weight:bold;">70%</div>
<div class="a" style="left:896.3px;top:1704px;width:257.70000000000005px;height:50px;background:#28272d;border:2px solid #0b0b0d;border-radius:4px;box-shadow:inset 0 1px 0 #3e3d44"></div>
<div class="t" style="left:908.71px;top:1715.78px;font-size:26.60px;letter-spacing:1.17px;color:#e4e4e8;font-weight:bold;">Osc 2</div>
<svg style="left:1116.0px;top:1715.0px" width="20" height="28" viewBox="0 0 20 28">
<path d="M4 9.5 L10 3.5 L16 9.5 M4 18.5 L10 24.5 L16 18.5" fill="none" stroke="#d0d0d4" stroke-width="2"/></svg>
<div class="a" style="left:1193.5px;top:1398.5px;width:949.5px;height:380px;background:#3b3a44;border-radius:12px 12px 0 0"></div>
<div class="a" style="left:1215.4px;top:1422.5px;width:257.5999999999999px;height:50.0px;background:#28272d;border:2px solid #0b0b0d;border-radius:4px;box-shadow:inset 0 1px 0 #3e3d44"></div>
<div class="t" style="left:1227.70px;top:1432.33px;font-size:26.89px;letter-spacing:1.75px;color:#e4e4e8;font-weight:bold;">Delay Time</div>
<svg style="left:1435.0px;top:1433.5px" width="20" height="28" viewBox="0 0 20 28">
<path d="M4 9.5 L10 3.5 L16 9.5 M4 18.5 L10 24.5 L16 18.5" fill="none" stroke="#d0d0d4" stroke-width="2"/></svg>
<div class="t" style="left:1222.28px;top:1485.98px;font-size:28.49px;letter-spacing:-2.02px;color:#b4b3b9;font-weight:bold;">71%</div>
<div class="t" style="left:1449.55px;top:1484.28px;font-size:26.60px;letter-spacing:0.00px;color:#5c9fe8;font-weight:bold;">Y</div>
<div class="a" style="left:1215.4px;top:1678.8px;width:143.6px;height:64.5px;background:#28272d;border:2px solid #0b0b0d;border-radius:4px"></div>
<div class="t" style="left:1234.92px;top:1692.82px;font-size:20.06px;letter-spacing:2.81px;color:#a9a8ae;font-weight:bold;">SNAP</div>
<div class="a" style="left:1500.3px;top:1422.5px;width:330.70000000000005px;height:331.5px;background:#2a2930;border-radius:12px;box-shadow:0 0 0 1px #4e4d55"></div>
<div class="a" style="left:1502.3px;top:1424.5px;width:326.70000000000005px;height:327.5px;border-radius:10px;overflow:hidden"><div class="a" style="left:0;top:0.0px;width:326.70000000000005px;height:164.25px;background:linear-gradient(90deg,#315575,#5e6169,#78767c)"></div><div class="a" style="left:0;top:0.0px;width:326.70000000000005px;height:164.25px;background:linear-gradient(90deg,#2b2d35,#3c393d,#655e5a);-webkit-mask-image:linear-gradient(180deg,transparent,#000)"></div><div class="a" style="left:0;top:163.75px;width:326.70000000000005px;height:164.25px;background:linear-gradient(90deg,#2b2d35,#3c393d,#655e5a)"></div><div class="a" style="left:0;top:163.75px;width:326.70000000000005px;height:164.25px;background:linear-gradient(90deg,#1c1b20,#3b312a,#7c6549);-webkit-mask-image:linear-gradient(180deg,transparent,#000)"></div></div>
<svg style="left:0;top:0" width="2560" height="1849" viewBox="0 0 2560 1849"><line x1="1522.8" y1="1445.0" x2="1522.8" y2="1731.5" stroke="#a29e9c" stroke-opacity="0.5" stroke-width="2.6"/><line x1="1522.8" y1="1445.0" x2="1809.5" y2="1445.0" stroke="#a29e9c" stroke-opacity="0.5" stroke-width="2.6"/><line x1="1558.6" y1="1445.0" x2="1558.6" y2="1731.5" stroke="#a29e9c" stroke-opacity="0.5" stroke-width="2.6"/><line x1="1522.8" y1="1480.8" x2="1809.5" y2="1480.8" stroke="#a29e9c" stroke-opacity="0.5" stroke-width="2.6"/><line x1="1594.5" y1="1445.0" x2="1594.5" y2="1731.5" stroke="#a29e9c" stroke-opacity="0.5" stroke-width="2.6"/><line x1="1522.8" y1="1516.6" x2="1809.5" y2="1516.6" stroke="#a29e9c" stroke-opacity="0.5" stroke-width="2.6"/><line x1="1630.3" y1="1445.0" x2="1630.3" y2="1731.5" stroke="#a29e9c" stroke-opacity="0.5" stroke-width="2.6"/><line x1="1522.8" y1="1552.4" x2="1809.5" y2="1552.4" stroke="#a29e9c" stroke-opacity="0.5" stroke-width="2.6"/><line x1="1666.2" y1="1445.0" x2="1666.2" y2="1731.5" stroke="#a29e9c" stroke-opacity="0.5" stroke-width="2.6"/><line x1="1522.8" y1="1588.2" x2="1809.5" y2="1588.2" stroke="#a29e9c" stroke-opacity="0.5" stroke-width="2.6"/><line x1="1702.0" y1="1445.0" x2="1702.0" y2="1731.5" stroke="#a29e9c" stroke-opacity="0.5" stroke-width="2.6"/><line x1="1522.8" y1="1624.1" x2="1809.5" y2="1624.1" stroke="#a29e9c" stroke-opacity="0.5" stroke-width="2.6"/><line x1="1737.8" y1="1445.0" x2="1737.8" y2="1731.5" stroke="#a29e9c" stroke-opacity="0.5" stroke-width="2.6"/><line x1="1522.8" y1="1659.9" x2="1809.5" y2="1659.9" stroke="#a29e9c" stroke-opacity="0.5" stroke-width="2.6"/><line x1="1773.7" y1="1445.0" x2="1773.7" y2="1731.5" stroke="#a29e9c" stroke-opacity="0.5" stroke-width="2.6"/><line x1="1522.8" y1="1695.7" x2="1809.5" y2="1695.7" stroke="#a29e9c" stroke-opacity="0.5" stroke-width="2.6"/><line x1="1809.5" y1="1445.0" x2="1809.5" y2="1731.5" stroke="#a29e9c" stroke-opacity="0.5" stroke-width="2.6"/><line x1="1522.8" y1="1731.5" x2="1809.5" y2="1731.5" stroke="#a29e9c" stroke-opacity="0.5" stroke-width="2.6"/><line x1="1686" y1="1445.0" x2="1686" y2="1731.5" stroke="#6fa8ec" stroke-width="2.6" stroke-dasharray="5 4"/><line x1="1522.8" y1="1527" x2="1809.5" y2="1527" stroke="#f0c77f" stroke-width="3" stroke-dasharray="7 6"/><circle cx="1684.3" cy="1524.4" r="10" fill="#dcdce0" stroke="#1a1a1e" stroke-width="2"/></svg>
<div class="t" style="left:1863.56px;top:1663.94px;font-size:27.47px;letter-spacing:0.00px;color:#eec27f;font-weight:bold;">X</div>
<div class="t" style="left:2050.15px;top:1663.94px;font-size:27.47px;letter-spacing:1.79px;color:#b4b3b9;font-weight:bold;">57%</div>
<div class="a" style="left:1856.5px;top:1704px;width:258.0999999999999px;height:50.799999999999955px;background:#28272d;border:2px solid #0b0b0d;border-radius:4px;box-shadow:inset 0 1px 0 #3e3d44"></div>
<div class="t" style="left:1868.01px;top:1714.27px;font-size:29.80px;letter-spacing:-0.13px;color:#e4e4e8;font-weight:bold;">Bit Crush Bits</div>
<svg style="left:2076.6px;top:1715.4px" width="20" height="28" viewBox="0 0 20 28">
<path d="M4 9.5 L10 3.5 L16 9.5 M4 18.5 L10 24.5 L16 18.5" fill="none" stroke="#d0d0d4" stroke-width="2"/></svg>
<svg style="left:2169.8px;top:1467.2px" width="120" height="120" viewBox="0 0 120 120"><defs><radialGradient id="kb2229.81527.2" cx="0.45" cy="0.3" r="0.8"><stop offset="0" stop-color="#36353d"/><stop offset="1" stop-color="#25242a"/></radialGradient></defs><path d="M31.36 88.64 A40.5 40.5 0 1 1 88.64 88.64" fill="none" stroke="#050506" stroke-width="10"/><path d="M31.36 88.64 A40.5 40.5 0 1 1 90.10 32.90" fill="none" stroke="#5b9ce6" stroke-width="9" stroke-linecap="butt"/><circle cx="31.36" cy="88.64" r="4.5" fill="#5b9ce6"/><circle cx="60" cy="62" r="37" fill="#121115" opacity="0.8"/><circle cx="60" cy="60" r="35.5" fill="url(#kb2229.81527.2)"/><g transform="translate(77.09 44.61) rotate(48)"><path d="M0 -5 L5 4 L-5 4 Z" fill="#5b9ce6"/></g></svg>
<div class="t" style="left:2188.02px;top:1588.23px;font-size:26.89px;letter-spacing:0.43px;color:#b9b8be;font-weight:bold;">655</div>
<div class="t" style="left:2246.21px;top:1588.22px;font-size:27.00px;letter-spacing:0.00px;color:#a9a8ae;font-weight:normal;">ms</div>
<div class="a" style="left:2171.7px;top:1621.5px;width:119.7px;height:3px;background:#6a6970;"></div>
<div class="t" style="left:2183.66px;top:1633.92px;font-size:25.73px;letter-spacing:6.35px;color:#d6d6da;font-weight:bold;">SNAP</div>
<div class="t" style="left:2188.71px;top:1656.42px;font-size:25.73px;letter-spacing:6.95px;color:#d6d6da;font-weight:bold;">TIME</div>
<div class="a" style="left:2323px;top:1398.3px;width:227.5px;height:370.3px;background:linear-gradient(180deg,#2f2e37,#3a3942);border-radius:12px"></div>
<div class="a" style="left:2437.4px;top:1398.3px;width:113.1px;height:370.3px;background:#000;border-radius:12px"></div>
<div class="a" style="left:2400.5px;top:1422px;width:10.5px;height:333.5px;background:#0f0f11;border-radius:5px"></div>
<div class="t" style="left:2344.45px;top:1439.26px;font-size:19.77px;letter-spacing:0.35px;color:#b9b8be;font-weight:bold;">12</div>
<div class="a" style="left:2371.4px;top:1451px;width:15px;height:2px;background:#a9a8ae;"></div>
<div class="t" style="left:2352.20px;top:1512.77px;font-size:20.35px;letter-spacing:0.00px;color:#b9b8be;font-weight:bold;">0</div>
<div class="a" style="left:2371.4px;top:1523px;width:15px;height:2px;background:#a9a8ae;"></div>
<div class="a" style="left:2381px;top:1487px;width:5px;height:1.5px;background:#6a6970;"></div>
<div class="a" style="left:2381px;top:1560px;width:5px;height:1.5px;background:#6a6970;"></div>
<div class="a" style="left:2381px;top:1592px;width:5px;height:1.5px;background:#6a6970;"></div>
<div class="a" style="left:2381px;top:1642px;width:5px;height:1.5px;background:#6a6970;"></div>
<div class="a" style="left:2381px;top:1693.6px;width:5px;height:1.5px;background:#6a6970;"></div>
<div class="t" style="left:2354.29px;top:1713.46px;font-size:15.99px;letter-spacing:0.00px;color:#b9b8be;font-weight:normal;">-</div>
<div class="t" style="left:2362.15px;top:1712.83px;font-size:20.00px;letter-spacing:0.00px;color:#b9b8be;font-weight:normal;">∞</div>
<div class="a" style="left:2386.7px;top:1493.6px;width:35.3px;height:58.4px;background:linear-gradient(180deg,#77767d,#55545b 50%,#6a6970);border:1.5px solid #2a2930;border-radius:6px"></div>
<div class="a" style="left:2391px;top:1521.5px;width:27px;height:4px;background:#6aaaf0;border-radius:2px"></div>
<div class="a" style="left:2452.0px;top:1428px;width:5px;height:326px;background:#1f1e23;"></div>
<div class="a" style="left:2452.3px;top:1410px;width:4.8px;height:7px;background:#55545b;border-radius:3px"></div>
<div class="a" style="left:2460.9px;top:1428px;width:5px;height:326px;background:#1f1e23;"></div>
<div class="a" style="left:2461.2000000000003px;top:1410px;width:4.8px;height:7px;background:#55545b;border-radius:3px"></div>
<div class="a" style="left:2469.8px;top:1428px;width:5px;height:326px;background:#1f1e23;"></div>
<div class="a" style="left:2470.1000000000004px;top:1410px;width:4.8px;height:7px;background:#55545b;border-radius:3px"></div>
<div class="a" style="left:2478.7px;top:1428px;width:5px;height:326px;background:#1f1e23;"></div>
<div class="a" style="left:2479.0px;top:1410px;width:4.8px;height:7px;background:#55545b;border-radius:3px"></div>
<div class="a" style="left:2487.6px;top:1428px;width:5px;height:326px;background:#1f1e23;"></div>
<div class="a" style="left:2487.9px;top:1410px;width:4.8px;height:7px;background:#55545b;border-radius:3px"></div>
<div class="a" style="left:2496.5px;top:1428px;width:5px;height:326px;background:#1f1e23;"></div>
<div class="a" style="left:2496.8px;top:1410px;width:4.8px;height:7px;background:#55545b;border-radius:3px"></div>
<div class="a" style="left:2505.4px;top:1428px;width:5px;height:326px;background:#1f1e23;"></div>
<div class="a" style="left:2505.7000000000003px;top:1410px;width:4.8px;height:7px;background:#55545b;border-radius:3px"></div>
<div class="a" style="left:2514.3px;top:1428px;width:5px;height:326px;background:#1f1e23;"></div>
<div class="a" style="left:2514.6000000000004px;top:1410px;width:4.8px;height:7px;background:#55545b;border-radius:3px"></div>
<div class="a" style="left:2523.2px;top:1428px;width:5px;height:326px;background:#1f1e23;"></div>
<div class="a" style="left:2523.5px;top:1410px;width:4.8px;height:7px;background:#55545b;border-radius:3px"></div>
<div class="a" style="left:2532.1px;top:1428px;width:5px;height:326px;background:#1f1e23;"></div>
<div class="a" style="left:2532.4px;top:1410px;width:4.8px;height:7px;background:#55545b;border-radius:3px"></div>
<div class="a" style="left:0px;top:1778px;width:2560px;height:71px;background:#151417;"></div>
<div class="t" style="left:2165.34px;top:1803.12px;font-size:27.62px;letter-spacing:3.84px;color:#6b5949;font-weight:bold;">UPDATE</div>
<div class="t" style="left:2352.15px;top:1803.12px;font-size:27.62px;letter-spacing:5.58px;color:#e6e6ea;font-weight:bold;">HELP</div>
<svg style="left:2510px;top:1798px" width="48" height="48" viewBox="2510 1798 48 48">
<path d="M2515.5 1841.4 L2551.7 1804.2 M2531 1841.4 L2551.7 1821" stroke="#7b7a7f" stroke-width="3" stroke-linecap="round"/></svg>

<div class="a" style="left:0;top:0;width:1.3px;height:1849px;background:#0c0c10"></div>
<div class="a" style="left:2558.2px;top:0;width:1.8px;height:1849px;background:#0c0c10"></div>
</body></html>
